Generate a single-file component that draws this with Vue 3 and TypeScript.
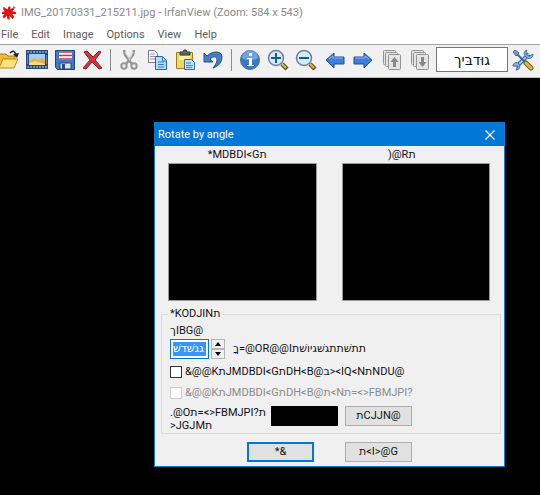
<script setup lang="ts">
import { ref } from 'vue'

const menus: string[] = ['File', 'Edit', 'Image', 'Options', 'View', 'Help']
const zoomBox = ref('גוּדבּיך')
const angle = ref('גגשׁדשׁ')
const applySelection = ref(false)
const antialias = ref(false)
</script>

<template>
  <div class="app">
    <header class="titlebar">
      <svg class="logo" viewBox="0 0 16 16" aria-hidden="true">
        <path d="M1 2l2 1M12 1l2 2M1 12l2-2M11 14l1-2" stroke="#8d7775" stroke-width="1.5" />
        <path d="M7 1l2 0 0 3 3-2 1 2-2 2 4 1 0 2-4 0 2 3-2 2-3-3 0 4-2 0-1-4-3 3-1-2 2-3-3 0 0-2 3-1-2-2 1-2 4 2z" fill="#e3140f" />
      </svg>
      <span>IMG_20170331_215211.jpg - IrfanView (Zoom: 584 x 543)</span>
    </header>
    <nav class="menubar">
      <button v-for="m in menus" :key="m" type="button">{{ m }}</button>
    </nav>
    <div class="toolbar">
      <div class="group">
        <button type="button" aria-label="Open">
          <svg viewBox="0 0 22 22">
            <path d="M1 18V5h7l2 2h7v5" fill="#e9b93c" stroke="#a77b16" />
            <path d="M1 19l4-9h15l-4 9z" fill="#ffe27a" stroke="#b58a1c" />
            <path d="M12 4c3-3 5-2 6 2" fill="none" stroke="#222" stroke-width="1.5" />
            <path d="M15 5l6-1-2 5z" fill="#222" />
          </svg>
        </button>
        <button type="button" aria-label="Slideshow">
          <svg viewBox="0 0 22 22">
            <path d="M0 1h22v19H0z" fill="#294a78" />
            <path d="M3 5h16v11H3z" fill="#9ed0f5" />
            <path d="M3 12l5-3 4 2 4-2 3 2v5H3z" fill="#e8ae42" />
            <path d="M3 14l6-2 10 3v1H3z" fill="#f8da83" />
            <path d="M1 3h20M1 18h20" stroke="#87a9cc" stroke-width="1.500" stroke-dasharray="2 1" />
            <path d="M1.500 6v9M20.500 6v9" stroke="#5c87b8" />
          </svg>
        </button>
        <button type="button" aria-label="Save">
          <svg viewBox="0 0 22 22">
            <path d="M1.500 1.500h19v19h-17l-2-2z" fill="#3f79c9" stroke="#23457e" />
            <path d="M5 2h13v9H5z" fill="#fff" />
            <path d="M5 3h13M5 6.500h13M5 10h13" stroke="#c6313b" stroke-width="1.500" />
            <path d="M6 14h11v6H6z" fill="#d9e3ec" stroke="#29476e" />
            <path d="M8 15h3v5H8z" fill="#264b80" />
          </svg>
        </button>
        <button type="button" aria-label="Delete">
          <svg viewBox="0 0 22 22">
            <path d="M2 3l3-1 6 6 6-6 2 1-6 8 7 8-3 1-7-7-6 7-3-1 7-8z" fill="#cf3640" stroke="#86202a" />
          </svg>
        </button>
      </div>
      <span class="sep sep-first"></span>
      <div class="group">
        <button type="button" aria-label="Cut">
          <svg viewBox="0 0 22 22" fill="none" stroke="#969696">
            <path d="M6 1l1 5 7 9M16 1l-1 5-7 9" stroke-width="2.500" />
            <path d="M7 3l5 8M15 3l-4 8" stroke="#d6d6d6" />
            <circle cx="6" cy="17" r="2.700" stroke-width="2" />
            <circle cx="16" cy="17" r="2.700" stroke-width="2" />
          </svg>
        </button>
        <button type="button" aria-label="Copy">
          <svg viewBox="0 0 22 22">
            <path d="M2.500 1.500h6l3 3v9h-9z" fill="#f8f6fc" stroke="#7c7390" />
            <path d="M4 5h5M4 7.500h6M4 10h6" stroke="#a294ac" />
            <path d="M9.500 7.500h7l4 4v9h-11z" fill="#b5dcff" stroke="#2865ad" />
            <path d="M16.500 8v4h4M12 13h6M12 15.500h6M12 18h6" fill="none" stroke="#3c7cc4" />
          </svg>
        </button>
        <button type="button" aria-label="Paste">
          <svg viewBox="0 0 22 22">
            <path d="M2.500 3.500h16v16h-16z" fill="#f3d952" stroke="#96801d" />
            <path d="M6 5V3h3l1-2h2l1 2h3v3H6z" fill="#626766" stroke="#363b3a" />
            <path d="M5 7h11v4H5z" fill="#fcf2a3" />
            <path d="M10.500 10.500h7l3 3v7h-10z" fill="#bfe2ff" stroke="#356bac" />
            <path d="M12 14h5M12 16.500h7M12 18.500h6" stroke="#4680bd" />
          </svg>
        </button>
        <button type="button" aria-label="Undo">
          <svg viewBox="0 0 22 22">
            <path d="M2 4v9h9L8 10c3-3 7-3 7 1 0 3-2 5-4 8 6-2 9-6 9-11 0-6-9-7-15-1z" fill="#467ec5" stroke="#264f8b" />
          </svg>
        </button>
      </div>
      <span class="sep"></span>
      <div class="group">
        <button type="button" aria-label="Information">
          <svg viewBox="0 0 22 22">
            <circle cx="11" cy="11" r="9.500" fill="#3c79c5" stroke="#536f98" />
            <path d="M3 9a8 8 0 0 1 16 0c-5 3-11 3-16 0z" fill="#6ca4de" />
            <path d="M10 4h3v3h-3zM8 9h5v7h2v1H8v-1h2v-6H8z" fill="#fff" />
          </svg>
        </button>
        <button type="button" aria-label="Zoom in">
          <svg viewBox="0 0 22 22">
            <path d="M15 15l5 5" stroke="#665620" stroke-width="4.500" />
            <path d="M15 15l4 4" stroke="#d9bb50" stroke-width="2" />
            <circle cx="9" cy="9" r="7.500" fill="#d2edff" stroke="#6f7d9d" stroke-width="1.500" />
            <path d="M4 9h10M9 4v10" stroke="#1855a0" stroke-width="2" />
          </svg>
        </button>
        <button type="button" aria-label="Zoom out">
          <svg viewBox="0 0 22 22">
            <path d="M15 15l5 5" stroke="#665620" stroke-width="4.500" />
            <path d="M15 15l4 4" stroke="#d9bb50" stroke-width="2" />
            <circle cx="9" cy="9" r="7.500" fill="#d2edff" stroke="#6f7d9d" stroke-width="1.500" />
            <path d="M4 9h10" stroke="#1855a0" stroke-width="2" />
          </svg>
        </button>
      </div>
      <div class="group next">
        <button type="button" aria-label="Previous image">
          <svg viewBox="0 0 22 22">
            <path d="M2 11l8-7v4h10v7H10v4z" fill="#3d7fdc" stroke="#264b91" />
            <path d="M5 10l4-3v2h10" fill="none" stroke="#85b5f3" />
          </svg>
        </button>
        <button type="button" aria-label="Next image">
          <svg viewBox="0 0 22 22">
            <path d="M20 11l-8-7v4H2v7h10v4z" fill="#3d7fdc" stroke="#264b91" />
            <path d="M3 9h10V7l4 3" fill="none" stroke="#85b5f3" />
          </svg>
        </button>
      </div>
      <div class="group next">
        <button type="button" aria-label="Previous page">
          <svg viewBox="0 0 22 22" fill="#e4e4e4" stroke="#939393">
            <rect x="2.500" y="1.500" width="12" height="14" rx="1" />
            <rect x="4.500" y="3.500" width="12" height="14" rx="1" />
            <rect x="7.500" y="5.500" width="12" height="15" rx="1" />
            <path d="M13.500 8l4 5h-2.500v5h-3v-5H9.500z" fill="#888" stroke="none" />
          </svg>
        </button>
        <button type="button" aria-label="Next page">
          <svg viewBox="0 0 22 22" fill="#e4e4e4" stroke="#939393">
            <rect x="2.500" y="1.500" width="12" height="14" rx="1" />
            <rect x="4.500" y="3.500" width="12" height="14" rx="1" />
            <rect x="7.500" y="5.500" width="12" height="15" rx="1" />
            <path d="M13.500 18l4-5h-2.500V8h-3v5H9.500z" fill="#888" stroke="none" />
          </svg>
        </button>
      </div>
      <input v-model="zoomBox" class="zoom-box" type="text" dir="rtl" aria-label="Zoom" />
      <button type="button" aria-label="Settings">
        <svg viewBox="0 0 22 22">
          <path d="M4 18L17 5" stroke="#37699f" stroke-width="4" />
          <path d="M4 18L17 5" stroke="#9fc8ee" stroke-width="2" />
          <path d="M15 1c-2 3 0 6 3 6l3-2c0 4-4 6-7 3s-2-6 1-7zM1 17c0-3 4-5 6-2s0 6-3 6l2-4z" fill="#8bb9e6" stroke="#37699f" />
          <path d="M4 4l9 9" stroke="#3e6693" stroke-width="2" />
          <path d="M1 3l2-2 4 3-3 3z" fill="#8196da" stroke="#4c62a8" />
          <path d="M14 14l5 5" stroke="#745c18" stroke-width="5" stroke-linecap="round" />
          <path d="M14 14l5 5" stroke="#dfb93f" stroke-width="3" stroke-linecap="round" />
        </svg>
      </button>
    </div>

    <main class="canvas">
      <section class="dialog" role="dialog" aria-labelledby="dialog-title">
        <div class="dialog-title">
          <h1 id="dialog-title">Rotate by angle</h1>
          <button type="button" aria-label="Close">
            <svg viewBox="0 0 10 10"><path d="M.5 .5l9 9M9.500 .5l-9 9" stroke="#fff" stroke-width="1.200" /></svg>
          </button>
        </div>
        <div class="dialog-body">
          <div class="previews">
            <figure>
              <figcaption>*MDBDI&lt;Gת</figcaption>
              <div class="preview"></div>
            </figure>
            <figure>
              <figcaption class="result">)@Rת</figcaption>
              <div class="preview"></div>
            </figure>
          </div>
          <fieldset>
            <legend>*KODJINת</legend>
            <label class="angle-label" for="angle">ךIBG@</label>
            <div class="angle-row">
              <div class="angle-box">
                <input id="angle" v-model="angle" type="text" />
              </div>
              <div class="spinner">
                <button type="button" aria-label="Increase"><svg viewBox="0 0 6 4"><path d="M0 4l3-4 3 4z" /></svg></button>
                <button type="button" aria-label="Decrease"><svg viewBox="0 0 6 4"><path d="M0 0l3 4 3-4z" /></svg></button>
              </div>
              <span class="hint">ךָ=@OR@@Iתתשׁתתגשׁגיושׁת</span>
            </div>
            <label class="check">
              <input v-model="applySelection" type="checkbox" />
              <span>&amp;@@KתJMDBDI&lt;GתDH&lt;B@ב&gt;&lt;IQ&lt;NתNDU@</span>
            </label>
            <label class="check disabled">
              <input v-model="antialias" type="checkbox" disabled />
              <span>&amp;@@KתJMDBDI&lt;GתDH&lt;B@ת&lt;Nת=&lt;&gt;FBMJPI?</span>
            </label>
            <div class="color-row">
              <p>.@Oת=&lt;&gt;FBMJPI?&lrm;ת<br />&gt;JGJMת</p>
              <span class="swatch"></span>
              <button class="push" type="button">תCJJN@</button>
            </div>
          </fieldset>
          <div class="actions">
            <button class="push default" type="button">*&amp;</button>
            <button class="push" type="button">ת&lt;I&gt;@G</button>
          </div>
        </div>
      </section>
    </main>
  </div>
</template>

<style>
body {
  margin: 0;
  background: #000;
}
</style>

<style scoped>
.app {
  display: flex;
  flex-direction: column;
  min-height: 100vh;
  overflow: hidden;
  background: #000;
  color: #111;
  font: 11px/16px "Roboto", "DejaVu Sans", sans-serif;
}
button,
input {
  box-sizing: border-box;
  margin: 0;
  padding: 0;
  border: 0;
  background: none;
  color: inherit;
  font: inherit;
}
svg {
  display: block;
}
.titlebar {
  display: flex;
  align-items: center;
  gap: 4px;
  height: 25px;
  padding-left: 2px;
  background: #fff;
  color: #8a8a8a;
  white-space: nowrap;
}
.logo {
  width: 15px;
  height: 16px;
}
.menubar {
  display: flex;
  gap: 13px;
  height: 19px;
  padding-left: 1px;
  background: #fff;
  border-bottom: 1px solid #a5a5a5;
  color: #5c5c5c;
}
.toolbar {
  box-sizing: border-box;
  display: flex;
  align-items: center;
  height: 33px;
  padding-bottom: 3px;
  border-bottom: 1px solid #bdbdbd;
  background: #f1f1f1;
}
.group {
  display: flex;
  flex: none;
  gap: 4px;
}
.group:first-child {
  margin-left: -3px;
}
.group.next {
  margin-left: 5px;
}
.toolbar button {
  flex: none;
  width: 24px;
  height: 24px;
  padding: 1px;
}
.toolbar svg {
  width: 22px;
  height: 22px;
}
.sep {
  flex: none;
  width: 1px;
  height: 22px;
  margin: 0 6px;
  background: #8c8c8c;
}
.sep-first {
  margin-left: 5px;
}
.zoom-box {
  width: 72px;
  height: 25px;
  margin: 0 3px 0 4px;
  border: 1px solid #777;
  background: #fff;
  font-size: 14px;
  text-align: center;
}
.canvas {
  display: flex;
  flex: 1;
  align-items: flex-start;
  padding: 44px 35px 28px 154px;
}
.dialog {
  box-sizing: border-box;
  flex: 1;
  border: 1px solid #1677c8;
  background: #f0f0f0;
}
.dialog-title {
  display: flex;
  align-items: center;
  justify-content: space-between;
  height: 23px;
  padding: 0 9px 0 3px;
  background: #0078d7;
  color: #fff;
}
.dialog-title h1 {
  margin: 0;
  font: inherit;
}
.dialog-title svg {
  width: 10px;
  height: 10px;
}
.dialog-body {
  padding: 1px 3px 4px 6px;
}
.previews {
  display: grid;
  grid-template-columns: 1fr 1fr;
  gap: 25px;
  padding: 0 11px 0 7px;
}
figure {
  margin: 0;
}
figcaption {
  padding-right: 10px;
  text-align: center;
}
figcaption.result {
  padding-right: 28px;
}
.preview {
  height: 136px;
  border: 1px solid #999;
  background: #000;
}
fieldset {
  min-width: 0;
  margin: 5px 0 0;
  padding: 0 9px 1px 8px;
  border: 1px solid #dcdcdc;
}
legend {
  margin-left: -2px;
  padding: 0 2px;
}
.angle-label {
  display: block;
  padding-top: 1px;
}
.angle-row {
  display: flex;
  align-items: center;
}
.angle-box {
  box-sizing: border-box;
  width: 39px;
  height: 20px;
  padding: 2px;
  border: 1px solid #0078d7;
  background: #fff;
}
.angle-box input {
  display: block;
  width: 100%;
  height: 14px;
  background: #3297fd;
  color: #fff;
  line-height: 14px;
}
.spinner {
  display: flex;
  flex-direction: column;
  margin: 0 8px 0 2px;
}
.spinner button {
  display: grid;
  place-items: center;
  width: 14px;
  height: 10px;
  border: 1px solid #b5b5b5;
}
.spinner svg {
  width: 6px;
  height: 4px;
}
.hint {
  white-space: nowrap;
}
.check {
  display: flex;
  align-items: center;
  gap: 3px;
  height: 16px;
  margin-top: 5px;
  white-space: nowrap;
}
.check input {
  appearance: none;
  width: 12px;
  height: 12px;
  border: 1px solid #333;
  background: #fff;
}
.check.disabled {
  color: #8b8b8b;
}
.check.disabled input {
  border-color: #ccc;
}
.color-row {
  display: flex;
  align-items: flex-start;
  margin-top: 5px;
}
.color-row p {
  width: 101px;
  margin: 0;
  line-height: 13px;
}
.swatch {
  width: 67px;
  height: 20px;
  margin-right: 7px;
  background: #000;
}
.push {
  width: 67px;
  height: 20px;
  border: 1px solid #adadad;
  background: #e1e1e1;
}
.push.default {
  border: 2px solid #0078d7;
}
.actions {
  display: flex;
  gap: 31px;
  padding: 8px 0 0 86px;
}
</style>
